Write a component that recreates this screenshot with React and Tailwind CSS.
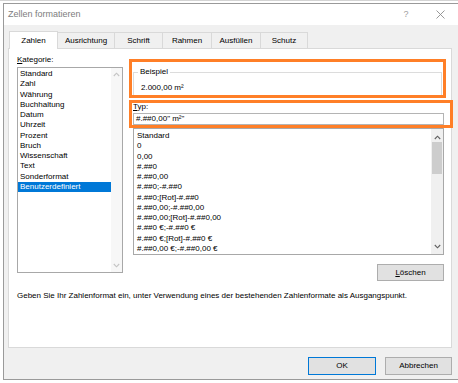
const cats = ["Standard","Zahl","Währung","Buchhaltung","Datum","Uhrzeit","Prozent","Bruch","Wissenschaft","Text","Sonderformat","Benutzerdefiniert"];
const fmts = ["Standard","0","0,00","#.##0","#.##0,00","#.##0;-#.##0","#.##0;[Rot]-#.##0","#.##0,00;-#.##0,00","#.##0,00;[Rot]-#.##0,00","#.##0 €;-#.##0 €","#.##0 €;[Rot]-#.##0 €","#.##0,00 €;-#.##0,00 €"];
const tabs = [["Zahlen",49],["Ausrichtung",57],["Schrift",48],["Rahmen",49],["Ausfüllen",49],["Schutz",47]];

function Chevron({ up, color }) {
  return (
    <svg width="7" height="5" viewBox="0 0 7 5">
      <path d={up ? "M0.8 4 L3.5 1.2 L6.2 4" : "M0.8 1 L3.5 3.8 L6.2 1"} fill="none" stroke={color} strokeWidth="1.1" />
    </svg>
  );
}

export default function App() {
  return (
    <div className="w-[458px] h-[383px] overflow-hidden bg-white font-['Liberation_Sans',sans-serif] text-[8px] text-black border-t border-t-[#d4d4d4]">
      <div className="ml-[3px] mt-[2px] w-[456px] h-[377px] border border-[#9a9a9a] bg-[#f0f0f0] flex flex-col">
        {/* title bar */}
        <div className="h-[21px] bg-white flex items-center pl-[4px] shrink-0">
          <span className="text-[9px] text-[#7d7d7d]">Zellen formatieren</span>
          <span className="ml-auto w-[12px] text-center text-[9px] text-[#a0a0a0]">?</span>
          <span className="ml-[22px] mr-[12px] w-[12px] flex items-center justify-center">
            <svg width="9" height="9" viewBox="0 0 9 9">
              <path d="M0.5 0.5 L8.5 8.5 M8.5 0.5 L0.5 8.5" stroke="#8c8c8c" strokeWidth="0.9" />
            </svg>
          </span>
        </div>
        {/* tabs */}
        <div className="mt-[6px] pl-[5px] flex items-end h-[17px] shrink-0">
          {tabs.map(([t, w], i) => (
            <div
              key={t}
              style={{ width: w }}
              className={
                i === 0
                  ? "h-[18px] -mb-px bg-white border border-b-0 border-[#d9d9d9] flex items-center justify-center relative z-10"
                  : "h-[16px] bg-[#f0f0f0] border border-b-0 border-l-0 border-[#d9d9d9] flex items-center justify-center"
              }
            >
              {t}
            </div>
          ))}
        </div>
        {/* panel */}
        <div className="ml-[4px] w-[444px] h-[300px] bg-white border border-[#d9d9d9] flex flex-col pl-[8px] pt-[5px] shrink-0">
          <div className="flex gap-[10px]">
            {/* left column */}
            <div className="flex flex-col w-[106px]">
              <div className="h-[13px] leading-[12px]"><span className="underline">K</span>ategorie:</div>
              <div className="h-[206px] border border-[#a8a8a8] flex">
                <div className="flex-1 pt-[1px]">
                  {cats.map((c, i) => (
                    <div
                      key={c}
                      className={
                        i === cats.length - 1
                          ? "leading-[10.27px] pl-[2px] bg-[#0078d7] text-white"
                          : "leading-[10.27px] pl-[2px]"
                      }
                    >
                      {c}
                    </div>
                  ))}
                </div>
                <div className="w-[11px] bg-[#f7f7f7] flex flex-col items-center justify-between pt-[4px] pb-[4px]">
                  <Chevron up color="#c4c4c4" />
                  <Chevron color="#c4c4c4" />
                </div>
              </div>
            </div>
            {/* right column */}
            <div className="relative flex flex-col w-[311px]">
              <fieldset className="mt-[13px] w-[309px] h-[30px] border border-[#dcdcdc] pl-[7px]">
                <legend className="ml-[-3px] px-[2px] leading-[10px]">Beispiel</legend>
                <div className="leading-[10px] mt-[6px]">2.000,00 m²</div>
              </fieldset>
              <div className="mt-[5px] leading-[10px]"><span className="underline">T</span>yp:</div>
              <div className="mt-[1px] h-[12px] border border-[#b4b4b4] leading-[10px] pl-[2px]">#.##0,00" m²"</div>
              <div className="mt-[3px] h-[127px] border border-[#a8a8a8] flex">
                <div className="flex-1 pt-[2px] pl-[3px]">
                  {fmts.map((f) => (
                    <div key={f} className="leading-[10.27px] whitespace-nowrap">{f}</div>
                  ))}
                </div>
                <div className="w-[12px] bg-[#f0f0f0] flex flex-col items-center pt-[6px] pb-[5px]">
                  <Chevron up color="#606060" />
                  <div className="mt-[2px] w-[10px] h-[32px] bg-[#cdcdcd]" />
                  <div className="flex-1" />
                  <Chevron color="#606060" />
                </div>
              </div>
              <div className="mt-[9px] self-end w-[67px] h-[17px] bg-[#e1e1e1] border border-[#adadad] flex items-center justify-center">
                <span><span className="underline">L</span>öschen</span>
              </div>
              {/* annotation highlights */}
              <div className="absolute left-[-4px] top-[5px] w-[317px] h-[39px] border-[3px] border-[#ff7f27]" />
              <div className="absolute left-[-4px] top-[46px] w-[324px] h-[28px] border-[3px] border-[#ff7f27]" />
            </div>
          </div>
          <div className="mt-[10px] leading-[10px]">
            Geben Sie Ihr Zahlenformat ein, unter Verwendung eines der bestehenden Zahlenformate als Ausgangspunkt.
          </div>
        </div>
        {/* footer */}
        <div className="mt-[9px] flex justify-end gap-[9px] pr-[6px]">
          <div className="w-[68px] h-[18px] bg-[#e1e1e1] border border-[#0078d7] flex items-center justify-center">OK</div>
          <div className="w-[67px] h-[18px] bg-[#e1e1e1] border border-[#adadad] flex items-center justify-center">Abbrechen</div>
        </div>
      </div>
    </div>
  );
}
